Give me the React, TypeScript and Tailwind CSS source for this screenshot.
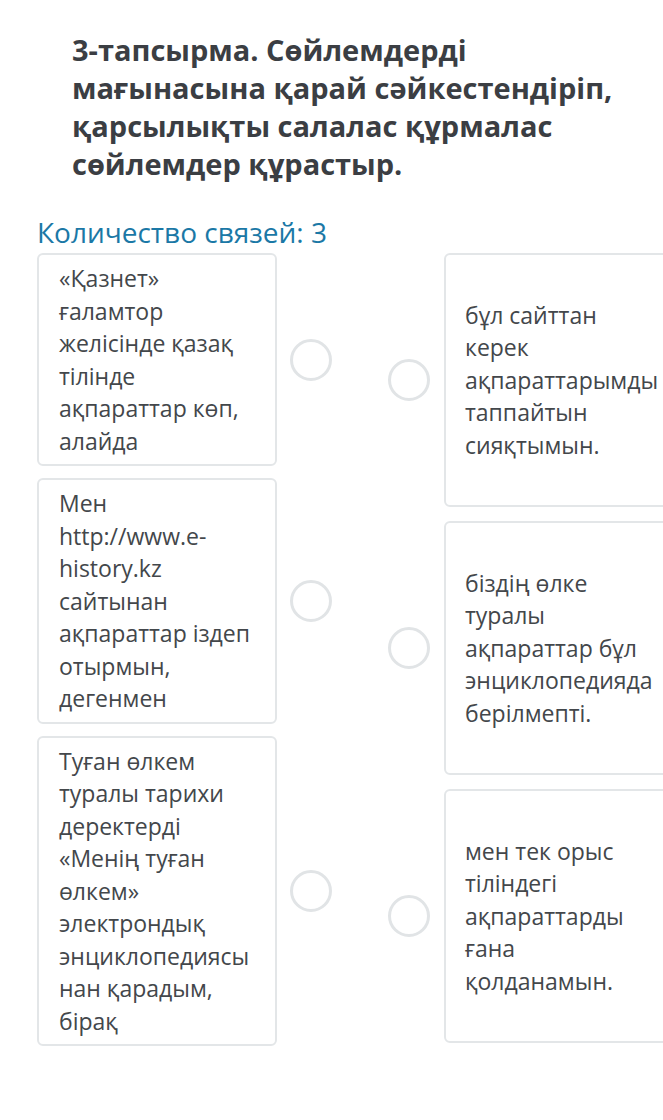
import React from "react";

const font = { fontFamily: '"Open Sans", "Noto Sans", sans-serif' };

function Circle() {
  return <div className="w-[42px] h-[42px] shrink-0 rounded-full border-[3px] border-[#e1e4e6] bg-white" />;
}

const left: string[][] = [
  ["«Қазнет»", "ғаламтор", "желісінде қазақ", "тілінде", "ақпараттар көп,", "алайда"],
  ["Мен", "http://www.e-", "history.kz", "сайтынан", "ақпараттар іздеп", "отырмын,", "дегенмен"],
  [
    "Туған өлкем",
    "туралы тарихи",
    "деректерді",
    "«Менің туған",
    "өлкем»",
    "электрондық",
    "энциклопедиясы",
    "нан қарадым,",
    "бірақ",
  ],
];

const right: string[][] = [
  ["бұл сайттан", "керек", "ақпараттарымды", "таппайтын", "сияқтымын."],
  ["біздің өлке", "туралы", "ақпараттар бұл", "энциклопедияда", "берілмепті."],
  ["мен тек орыс", "тіліндегі", "ақпараттарды", "ғана", "қолданамын."],
];

function Lines({ lines }: { lines: string[] }) {
  return (
    <div>
      {lines.map((l, i) => (
        <div key={i} className="whitespace-nowrap">
          {l}
        </div>
      ))}
    </div>
  );
}

export default function App() {
  return (
    <div className="w-[663px] h-[1120px] overflow-hidden bg-white" style={font}>
      <h1 className="pl-[72px] pr-[30px] pt-[31px] text-[29px] leading-[38px] font-bold text-[#3b3e43]">
        3-тапсырма. Сөйлемдерді мағынасына қарай сәйкестендіріп, қарсылықты салалас құрмалас сөйлемдер құрастыр.
      </h1>
      <div className="pl-[37px] mt-[33px] text-[28px] leading-[32px] text-[#1b78a6]">Количество связей: 3</div>
      <div className="flex pl-[37px] mt-[5px] gap-[56px] w-[760px]">
        <div className="flex flex-col gap-[12px]">
          {left.map((t, i) => (
            <div key={i} className="flex items-center gap-[13px]">
              <div className="w-[240px] rounded-[6px] border-2 border-[#e3e6e8] bg-white pl-[20px] pr-[10px] py-[7px] text-[23px] leading-[32.5px] text-[#43474b]">
                <Lines lines={t} />
              </div>
              <Circle />
            </div>
          ))}
        </div>
        <div className="flex flex-col gap-[14px]">
          {right.map((t, i) => (
            <div key={i} className="flex items-center gap-[14px]">
              <Circle />
              <div className="w-[240px] h-[254px] flex items-center rounded-[6px] border-2 border-[#e3e6e8] bg-white pl-[19px] pr-[10px] text-[23px] leading-[32.5px] text-[#43474b]">
                <Lines lines={t} />
              </div>
            </div>
          ))}
        </div>
      </div>
    </div>
  );
}
